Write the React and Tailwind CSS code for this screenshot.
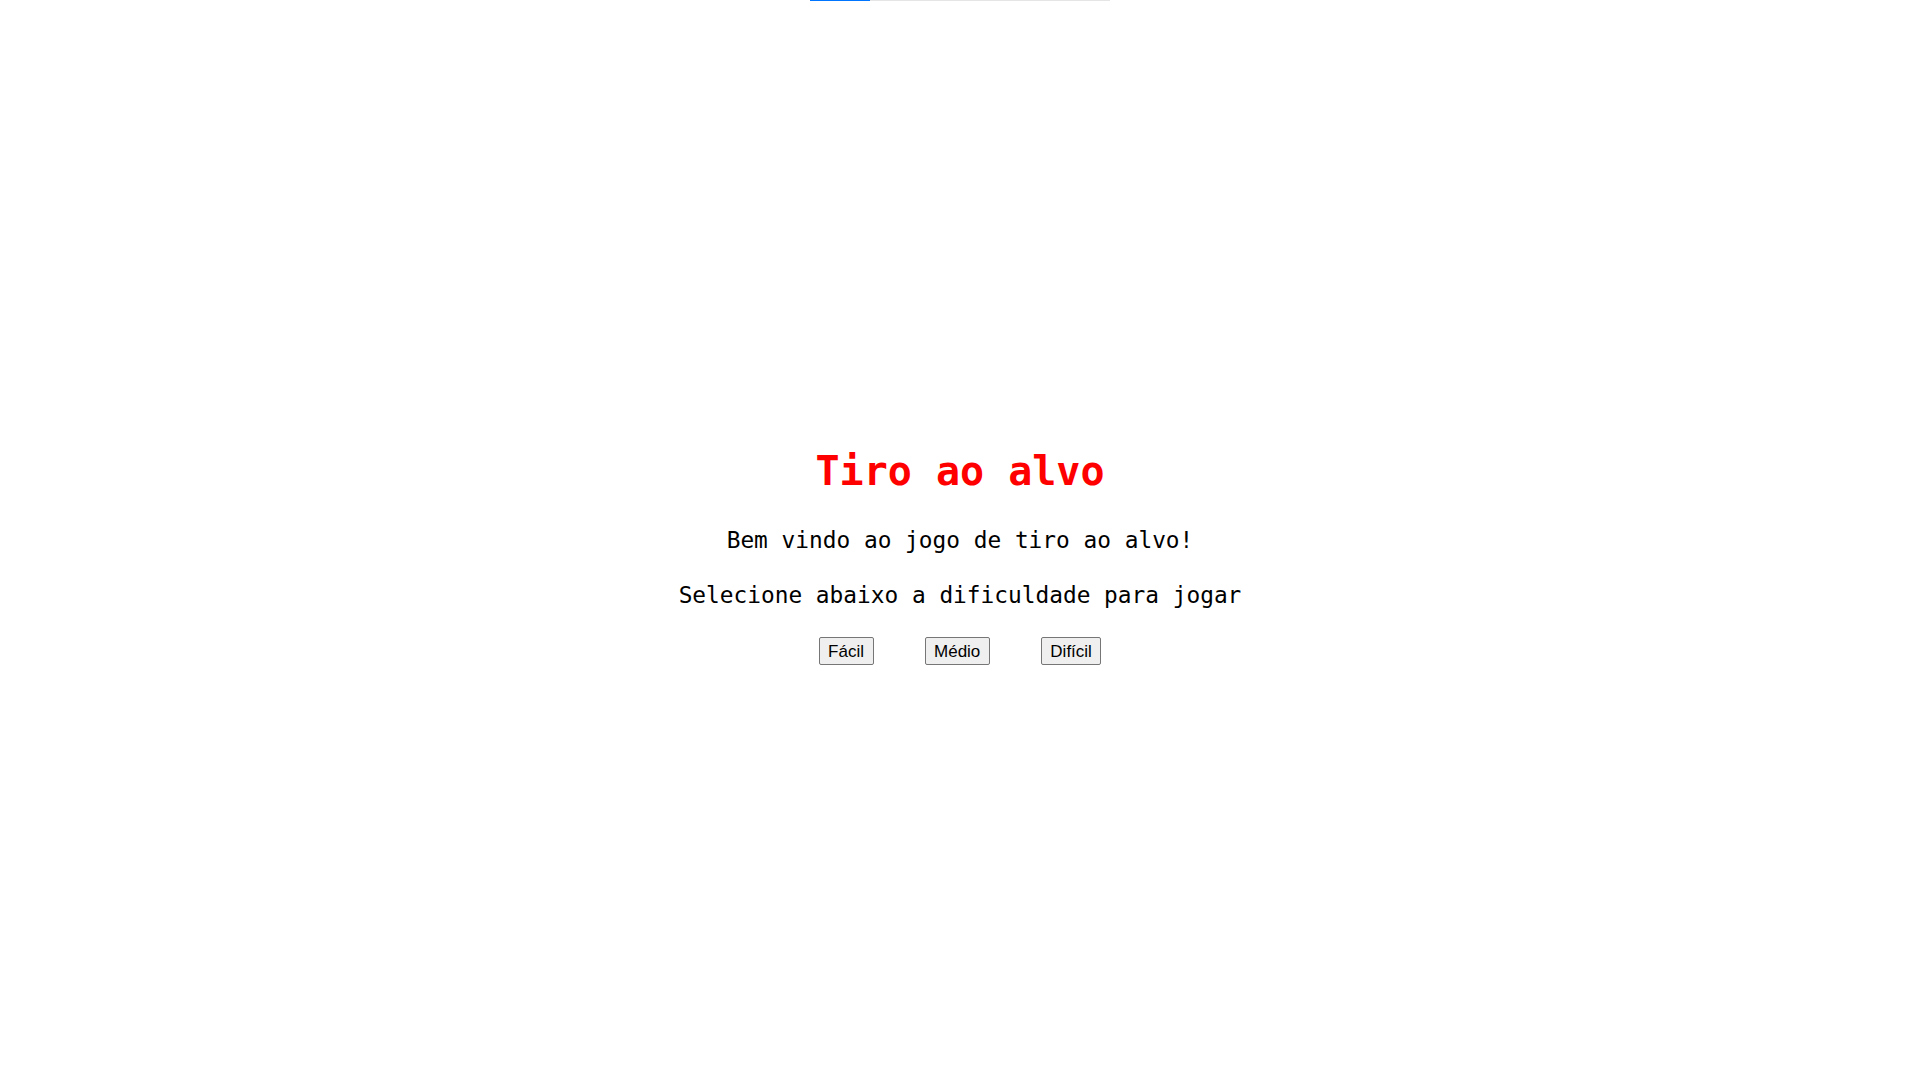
import React from 'react';

const levels = ['Fácil', 'Médio', 'Difícil'];

export default function App() {
    return (
        <div className="relative min-h-screen w-full bg-white">
            {/* progress strip peeking at the top */}
            <div className="absolute left-[810px] top-0 flex h-px w-[300px] bg-[#e5e5e5]">
                <div className="h-full w-[60px] bg-[#0075ff]" />
            </div>

            <main className="flex flex-col items-center pt-[447px] font-['DejaVu_Sans_Mono',monospace]">
                <h1 className="text-[40px] font-bold leading-[48px] text-[#ff0000]">Tiro ao alvo</h1>
                <p className="mt-[31px] text-[22.8px] leading-[28px] text-black">Bem vindo ao jogo de tiro ao alvo!</p>
                <p className="mt-[27px] text-[22.8px] leading-[28px] text-black">Selecione abaixo a dificuldade para jogar</p>

                <div className="mt-[28px] flex gap-[51px]">
                    {levels.map((level) => (
                        <button
                            key={level}
                            className="h-[28px] rounded-[2px] border border-[#767676] bg-[#efefef] px-[8.5px] font-['Liberation_Sans',Arial,sans-serif] text-[17px] leading-[19px] text-black"
                        >
                            {level}
                        </button>
                    ))}
                </div>
            </main>
        </div>
    );
}
